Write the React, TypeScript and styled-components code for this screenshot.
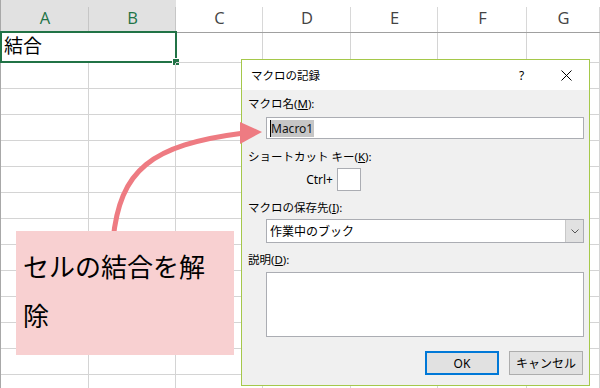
import React from "react";
import styled, { createGlobalStyle } from "styled-components";

const Global = createGlobalStyle`
  html, body { margin: 0; padding: 0; background: #fff; }
  body { width: 600px; height: 388px; overflow: hidden; }
  #root { width: 600px; height: 388px; }
`;

const Page = styled.div`
  position: relative;
  width: 600px;
  height: 388px;
  overflow: hidden;
  background: #fff;
`;

const Sheet = styled.div`
  display: grid;
  grid-template-columns: 88px 87px 87px 88px 87px 89px 1fr;
  grid-template-rows: 33px 30px;
  grid-auto-rows: 26px;
  border-left: 1px solid #a8a8a8;
`;

const ColHeader = styled.div<{ $selected?: boolean }>`
  box-sizing: border-box;
  display: flex;
  align-items: center;
  justify-content: center;
  padding-top: 3px;
  font-family: "Open Sans", "Noto Sans", sans-serif;
  font-size: 16.5px;
  color: ${(p) => (p.$selected ? "#217346" : "#444")};
  border-bottom: 1px solid #a0a0a0;
  background: linear-gradient(${(p) => (p.$selected ? "#c6c6c6" : "#d8d8d8")}, ${(p) => (p.$selected ? "#c6c6c6" : "#d8d8d8")}) right 7px / 1px 100% no-repeat,
    ${(p) => (p.$selected ? "#e1e1e1" : "#fff")};
`;

const Cell = styled.div<{ $span?: number }>`
  box-sizing: border-box;
  position: relative;
  grid-column: span ${(p) => p.$span ?? 1};
  border-right: 1px solid #d4d4d4;
  border-bottom: 1px solid #d4d4d4;
  padding: 2px 3px 0;
  font-family: "Noto Sans CJK JP", sans-serif;
  font-size: 19px;
  line-height: 19px;
  color: #000;
`;

const Selection = styled.div`
  position: absolute;
  left: -1px;
  top: -2px;
  right: -2px;
  bottom: -1px;
  border: 2px solid #217346;
`;

const FillHandle = styled.div`
  position: absolute;
  right: -5px;
  bottom: -5px;
  width: 6px;
  height: 6px;
  background: #217346;
  border: 1px solid #fff;
`;

const Dialog = styled.div`
  position: absolute;
  left: 241px;
  top: 59px;
  width: 349px;
  height: 327px;
  box-sizing: border-box;
  border: 1px solid #a5c84a;
  background: #f0f0f0;
  display: flex;
  flex-direction: column;
  font-family: "Noto Sans", "Noto Sans CJK JP", sans-serif;
  font-size: 11.5px;
  color: #000;
`;

const TitleBar = styled.div`
  height: 30px;
  flex: none;
  background: #fff;
  display: flex;
  align-items: center;
  padding-left: 9px;
`;

const Title = styled.div`
  flex: 1;
  font-size: 11.5px;
`;

const TitleButton = styled.div`
  width: 45px;
  height: 30px;
  display: flex;
  align-items: center;
  justify-content: center;
  font-size: 12px;
`;

const Body = styled.div`
  display: flex;
  flex-direction: column;
  padding: 6px 5px 0 6px;
`;

const Label = styled.div<{ $mt?: number }>`
  line-height: 16px;
  margin-top: ${(p) => p.$mt ?? 0}px;
  white-space: nowrap;
`;

const Field = styled.div<{ $mt: number; $h: number }>`
  box-sizing: border-box;
  margin-top: ${(p) => p.$mt}px;
  margin-left: 18px;
  height: ${(p) => p.$h}px;
  border: 1px solid #abadb3;
  background: #fff;
  display: flex;
  align-items: center;
`;

const InputText = styled.span`
  margin-left: 3px;
  padding: 0 1px 0 0;
  line-height: 17px;
  background: #c6c6c6;
  color: #111;
  border-left: 1px solid #000;
  font-size: 12px;
`;

const CtrlRow = styled.div`
  margin-top: 3px;
  height: 23px;
  display: flex;
  align-items: center;
  gap: 4px;
`;

const CtrlLabel = styled.div`
  width: 85px;
  text-align: right;
  font-size: 12px;
`;

const KeyBox = styled.div`
  box-sizing: border-box;
  width: 24px;
  height: 23px;
  border: 1px solid #abadb3;
  background: #fff;
`;

const SelectText = styled.div`
  flex: 1;
  padding-left: 3px;
  font-size: 12px;
`;

const DropButton = styled.div`
  width: 17px;
  align-self: stretch;
  background: #e1e1e1;
  border-left: 1px solid #c8c8c8;
  display: flex;
  align-items: center;
  justify-content: center;
`;

const ButtonRow = styled.div`
  margin-top: 14px;
  display: flex;
  justify-content: flex-end;
  gap: 10px;
  padding-right: 1px;
`;

const Button = styled.div<{ $primary?: boolean }>`
  box-sizing: border-box;
  width: 74px;
  height: 24px;
  background: #e1e1e1;
  border: ${(p) => (p.$primary ? "2px solid #0078d7" : "1px solid #adadad")};
  display: flex;
  align-items: center;
  justify-content: center;
  font-size: 12px;
`;

const ArrowLayer = styled.svg`
  position: absolute;
  left: 0;
  top: 0;
  pointer-events: none;
`;

const Callout = styled.div`
  position: absolute;
  left: 16px;
  top: 231px;
  width: 218px;
  height: 124px;
  box-sizing: border-box;
  background: #f8d0d1;
  padding: 10px 20px 0 7px;
  font-family: "Noto Sans CJK JP", sans-serif;
  font-size: 26px;
  line-height: 49px;
  color: #000;
`;

const cols = ["A", "B", "C", "D", "E", "F", "G"];

export default function App() {
  const rows = Array.from({ length: 13 });
  return (
    <Page>
      <Global />
      <Sheet>
        {cols.map((c, i) => (
          <ColHeader key={c} $selected={i < 2}>
            {c}
          </ColHeader>
        ))}
        <Cell $span={2}>
          結合
          <Selection>
            <FillHandle />
          </Selection>
        </Cell>
        {cols.slice(2).map((c) => (
          <Cell key={"r1" + c} />
        ))}
        {rows.map((_, r) =>
          cols.map((c) => <Cell key={r + c} />)
        )}
      </Sheet>

      <Dialog>
        <TitleBar>
          <Title>マクロの記録</Title>
          <TitleButton>?</TitleButton>
          <TitleButton>
            <svg width="11" height="11" viewBox="0 0 11 11">
              <path d="M0.5 0.5 L10.5 10.5 M10.5 0.5 L0.5 10.5" stroke="#000" strokeWidth="1" fill="none" />
            </svg>
          </TitleButton>
        </TitleBar>
        <Body>
          <Label>
            マクロ名(<u>M</u>):
          </Label>
          <Field $mt={5} $h={22}>
            <InputText>Macro1</InputText>
          </Field>
          <Label $mt={10}>
            ショートカット キー(<u>K</u>):
          </Label>
          <CtrlRow>
            <CtrlLabel>Ctrl+</CtrlLabel>
            <KeyBox />
          </CtrlRow>
          <Label $mt={9}>
            マクロの保存先(<u>I</u>):
          </Label>
          <Field $mt={3} $h={24}>
            <SelectText>作業中のブック</SelectText>
            <DropButton>
              <svg width="8" height="5" viewBox="0 0 8 5">
                <path d="M0.5 0.5 L4 4 L7.5 0.5" stroke="#555" strokeWidth="1" fill="none" />
              </svg>
            </DropButton>
          </Field>
          <Label $mt={9}>
            説明(<u>D</u>):
          </Label>
          <Field $mt={4} $h={65} />
          <ButtonRow>
            <Button $primary>OK</Button>
            <Button>キャンセル</Button>
          </ButtonRow>
        </Body>
      </Dialog>

      <ArrowLayer width="600" height="388" viewBox="0 0 600 388">
        <path d="M113 240 C120 170 150 145 244 133" stroke="#ee7b82" strokeWidth="5" fill="none" />
        <polygon points="240,122 262,132 240,144" fill="#ee7b82" />
      </ArrowLayer>

      <Callout>セルの結合を解除</Callout>
    </Page>
  );
}
